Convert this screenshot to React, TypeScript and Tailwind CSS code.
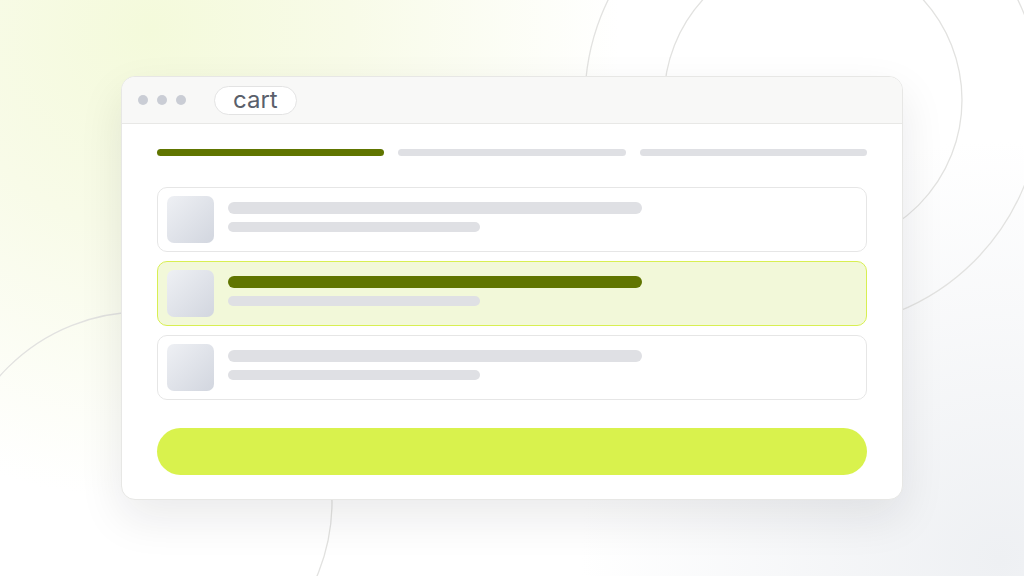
import React from "react";

function Row({ active }: { active?: boolean }) {
  return (
    <div
      className={
        "flex h-[65px] items-center gap-[14px] rounded-[10px] border px-[9px] " +
        (active ? "border-[#d8ef52] bg-[#f2f8d9]" : "border-[#e6e6e6] bg-white")
      }
    >
      <div className="h-[47px] w-[47px] shrink-0 rounded-[7px] bg-[linear-gradient(135deg,#eef0f4,#d2d6df)]" />
      <div className="flex flex-col gap-[8px] pt-[1px] pb-[6px]">
        <div className={"h-[12px] w-[414px] rounded-full " + (active ? "bg-[#607500]" : "bg-[#dfe0e4]")} />
        <div className="h-[10px] w-[252px] rounded-full bg-[#dfe0e4]" />
      </div>
    </div>
  );
}

export default function App() {
  return (
    <div className="relative flex h-[576px] w-[1024px] items-center justify-center overflow-hidden bg-[radial-gradient(circle_at_150px_30px,#f4fadb_0px,#f8fbe8_200px,rgba(255,255,255,0)_470px),radial-gradient(circle_at_1000px_560px,#eef0f3_0px,rgba(255,255,255,0)_420px)] bg-white font-['Inter','Liberation_Sans',sans-serif]">
      <svg className="absolute left-0 top-0" width="1024" height="576" viewBox="0 0 1024 576" fill="none">
        <circle cx="813" cy="100" r="149" stroke="#e2e2e0" strokeWidth="1.3" />
        <circle cx="813" cy="100" r="228" stroke="#e2e2e0" strokeWidth="1.3" />
        <circle cx="142" cy="502" r="190" stroke="#e2e2e0" strokeWidth="1.3" />
      </svg>
      <div className="relative flex w-[782px] flex-col overflow-hidden rounded-[14px] border border-[#e7e7e5] bg-white shadow-[0_18px_45px_rgba(20,20,30,0.09)]">
        <div className="flex h-[47px] items-center border-b border-[#e8e8e6] bg-[#f8f8f7] pl-[16px]">
          <div className="flex gap-[9px]">
            <div className="h-[10px] w-[10px] rounded-full bg-[#cacdd5]" />
            <div className="h-[10px] w-[10px] rounded-full bg-[#cacdd5]" />
            <div className="h-[10px] w-[10px] rounded-full bg-[#cacdd5]" />
          </div>
          <div className="ml-[28px] flex h-[29px] items-center rounded-full border border-[#e3e3e3] bg-white px-[18px] pb-[1px] text-[24px] font-normal leading-none text-[#5a5f6b]">
            cart
          </div>
        </div>
        <div className="flex flex-col px-[35px] pb-[24px] pt-[25px]">
          <div className="flex gap-[14px]">
            <div className="h-[7px] flex-1 rounded-full bg-[#607500]" />
            <div className="h-[7px] flex-1 rounded-full bg-[#dfe0e4]" />
            <div className="h-[7px] flex-1 rounded-full bg-[#dfe0e4]" />
          </div>
          <div className="mt-[31px] flex flex-col gap-[9px]">
            <Row />
            <Row active />
            <Row />
          </div>
          <div className="mt-[28px] h-[47px] rounded-full bg-[#d9f24d]" />
        </div>
      </div>
    </div>
  );
}
